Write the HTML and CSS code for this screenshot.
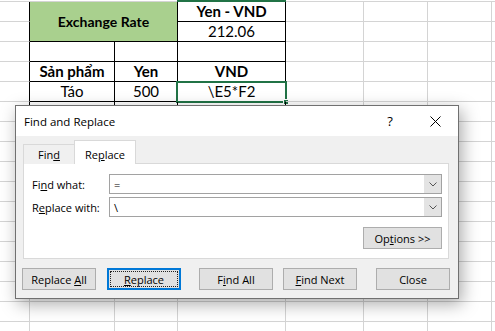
FILE: index.html
```html
<!DOCTYPE html>
<html>
<head>
<meta charset="utf-8">
<title>Find and Replace</title>
<link rel="stylesheet" href="styles.css">
</head>
<body>
<div class="screen">
  <div class="sheet">
    <div class="l"></div><div class="t merge">Exchange Rate</div><div class="t b topsel">Yen - VND</div><div></div><div></div><div></div><div></div>
    <div class="l"></div><div class="t">212.06</div><div></div><div></div><div></div><div></div>
    <div class="l"></div><div class="t"></div><div class="t"></div><div class="t"></div><div></div><div></div><div></div><div></div>
    <div class="l"></div><div class="t b">Sản phẩm</div><div class="t b">Yen</div><div class="t b">VND</div><div></div><div></div><div></div><div></div>
    <div class="l"></div><div class="t">Táo</div><div class="t">500</div><div class="t sel">\E5*F2<span class="selbox"></span><span class="handle"></span></div><div></div><div></div><div></div><div></div>
    <div class="l"></div><div class="t"></div><div class="t"></div><div class="t"></div><div></div><div></div><div></div><div></div>
    <div></div><div></div><div></div><div></div><div></div><div></div><div></div><div></div>
    <div></div><div></div><div></div><div></div><div></div><div></div><div></div><div></div>
    <div></div><div></div><div></div><div></div><div></div><div></div><div></div><div></div>
    <div></div><div></div><div></div><div></div><div></div><div></div><div></div><div></div>
    <div></div><div></div><div></div><div></div><div></div><div></div><div></div><div></div>
    <div></div><div></div><div></div><div></div><div></div><div></div><div></div><div></div>
    <div></div><div></div><div></div><div></div><div></div><div></div><div></div><div></div>
    <div></div><div></div><div></div><div></div><div></div><div></div><div></div><div></div>
    <div></div><div></div><div></div><div></div><div></div><div></div><div></div><div></div>
    <div></div><div></div><div></div><div></div><div></div><div></div><div></div><div></div>
    <div></div><div></div><div></div><div></div><div></div><div></div><div></div><div></div>
  </div>

  <div class="dialog">
    <div class="titlebar">
      <span class="title">Find and Replace</span>
      <span class="help">?</span>
      <svg class="close" width="11" height="11" viewBox="0 0 11 11"><path d="M0.5 0.5 L10.5 10.5 M10.5 0.5 L0.5 10.5" stroke="#000" stroke-width="1" fill="none"/></svg>
    </div>
    <div class="body">
      <div class="tabs">
        <div class="tab find">Fin<u>d</u></div>
        <div class="tab active">Re<u>p</u>lace</div>
      </div>
      <div class="panel">
        <div class="field">
          <span class="label">Fi<u>n</u>d what:</span>
          <div class="combo"><span class="val">=</span><span class="drop"><svg width="8" height="5" viewBox="0 0 8 5"><path d="M0.5 0.5 L4 4 L7.5 0.5" fill="none" stroke="#555" stroke-width="1"/></svg></span></div>
        </div>
        <div class="field">
          <span class="label">R<u>e</u>place with:</span>
          <div class="combo"><span class="val">\</span><span class="drop"><svg width="8" height="5" viewBox="0 0 8 5"><path d="M0.5 0.5 L4 4 L7.5 0.5" fill="none" stroke="#555" stroke-width="1"/></svg></span></div>
        </div>
        <div class="optrow"><button class="btn opt">Op<u>t</u>ions &gt;&gt;</button></div>
      </div>
      <div class="actions">
        <button class="btn">Replace <u>A</u>ll</button>
        <button class="btn focus g1"><u>R</u>eplace</button>
        <button class="btn g2">F<u>i</u>nd All</button>
        <button class="btn g3"><u>F</u>ind Next</button>
        <button class="btn g4">Close</button>
      </div>
    </div>
  </div>
</div>
</body>
</html>
```

FILE: styles.css
```css
* { box-sizing: border-box; }
html, body { margin: 0; padding: 0; }
body { background: #fff; font-family: "Lato", "Open Sans", sans-serif; }
.screen { position: relative; width: 495px; height: 331px; overflow: hidden; background: #fff; }

/* spreadsheet */
.sheet {
  display: grid;
  grid-template-columns: 30px 85px 63px 108px 78px 64px 64px 64px;
  grid-auto-rows: 20px;
  margin-top: 1px;
  border-top: 1px solid #d4d4d4;
}
.sheet > div {
  position: relative;
  display: flex;
  align-items: flex-end;
  justify-content: center;
  border-right: 1px solid #d4d4d4;
  border-bottom: 1px solid #d4d4d4;
  padding-bottom: 1px;
  font-size: 15px;
  line-height: 18px;
  color: #000;
  white-space: nowrap;
}
.sheet > .t { border-right-color: #000; border-bottom-color: #000; }
.sheet > .l { border-right-color: #000; }
.sheet > .merge {
  grid-column: span 2;
  grid-row: span 2;
  background: #a9d08e;
  align-items: center;
  padding-bottom: 0;
  font-weight: 700;
  font-size: 14px;
}
.sheet > .b { font-weight: 700; }
.topsel::before {
  content: "";
  position: absolute;
  left: -1px; right: -1px; top: -2px;
  height: 2px;
  background: #217346;
}
.selbox {
  position: absolute;
  left: -2px; right: -2px; top: -1px; bottom: -2px;
  border: 2px solid #217346;
}
.handle {
  position: absolute;
  right: -4px; bottom: -4px;
  width: 6px; height: 6px;
  background: #217346;
  border: 1px solid #fff;
}

/* dialog */
.dialog {
  position: absolute;
  left: 15px; top: 105px;
  width: 444px; height: 194px;
  border: 1px solid #707070;
  background: #f0f0f0;
  box-shadow: 3px 5px 16px rgba(0, 0, 0, 0.34);
  font-family: "Open Sans", "Noto Sans", sans-serif;
  font-size: 11px;
  color: #000;
  display: flex;
  flex-direction: column;
}
.titlebar {
  height: 30px;
  background: #fff;
  display: flex;
  align-items: center;
  padding: 0 17px 0 8px;
}
.title { flex: 1; font-size: 11.5px; }
.help { width: 12px; text-align: center; margin-right: 34px; font-size: 13px; }
.close { display: block; }

.body { flex: 1; padding-top: 4px; }
.tabs { display: flex; align-items: flex-end; height: 24px; padding-left: 7px; }
.tab {
  border: 1px solid #d9d9d9;
  border-bottom: 0;
  text-align: center;
  line-height: 16px;
}
.tab.find { width: 52px; height: 20px; padding-top: 2px; background: #f0f0f0; }
.tab.active {
  width: 62px; height: 24px;
  margin-left: -1px;
  padding-top: 6px;
  background: #fff;
  position: relative;
  z-index: 1;
}
.panel {
  margin: -1px 0 0 7px;
  width: 426px; height: 96px;
  background: #fff;
  border: 1px solid #d9d9d9;
  padding: 10px 6px 9px 8px;
}
.field { display: flex; align-items: center; height: 20px; }
.field + .field { margin-top: 3px; }
.label { width: 77px; }
.combo {
  width: 333px; height: 20px;
  border: 1px solid #a2a2a2;
  display: flex;
  align-items: center;
  padding-left: 4px;
}
.val { flex: 1; }
.drop {
  width: 17px; height: 18px;
  background: #e3e3e3;
  display: flex;
  align-items: center;
  justify-content: center;
}
.drop svg { display: block; }
.optrow { display: flex; justify-content: flex-end; margin-top: 10px; }

.btn {
  position: relative;
  width: 74px; height: 22px;
  padding: 0;
  margin: 0;
  background: #e1e1e1;
  border: 1px solid #adadad;
  font: inherit;
  color: #000;
}
.btn.opt { width: 79px; }
.btn.focus { border-color: #0078d7; box-shadow: inset 0 0 0 1px #0078d7; }
.btn.focus::after {
  content: "";
  position: absolute;
  left: 2px; right: 2px; top: 2px; bottom: 2px;
  border: 1px dotted #222;
}
.actions { display: flex; margin-top: 9px; padding-left: 6px; }
.g1 { margin-left: 11px; }
.g2 { margin-left: 18px; }
.g3 { margin-left: 10px; }
.g4 { margin-left: 19px; }
```
